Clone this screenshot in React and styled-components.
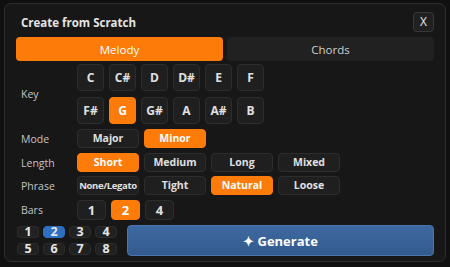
import * as React from "react"
import styled, { createGlobalStyle } from "styled-components"

const GlobalStyle = createGlobalStyle`
  html, body {
    margin: 0;
    padding: 0;
    background: #101010;
  }
  body {
    font-family: "Open Sans", "Noto Sans", sans-serif;
    color: #e2e2e2;
  }
  * {
    box-sizing: border-box;
  }
`

const orange = "#fd7b08"

const Panel = styled.div`
  margin: 3px 4px 0;
  width: 442px;
  height: 259px;
  background: #171717;
  border: 1px solid #2e2e2e;
  border-radius: 7px;
  padding: 8px 11px 0;
  display: flex;
  flex-direction: column;
`

const Header = styled.div`
  display: flex;
  justify-content: space-between;
  align-items: center;
  height: 20px;
  padding-left: 5px;
`

const Title = styled.h1`
  margin: 0;
  font-size: 11.5px;
  font-weight: 700;
  color: #e4e4e4;
`

const CloseButton = styled.button`
  width: 21px;
  height: 20px;
  padding: 0;
  border: 1px solid #383838;
  border-radius: 4px;
  background: #202020;
  color: #e8e8e8;
  font-family: inherit;
  font-size: 12px;
  line-height: 1;
`

const Tabs = styled.div`
  margin-top: 5px;
  display: grid;
  grid-template-columns: 1fr 1fr;
  gap: 4px;
`

const Tab = styled.button`
  height: 24px;
  padding: 0;
  border: none;
  border-radius: 4px;
  background: ${(p) => (p.$active ? orange : "#212121")};
  color: ${(p) => (p.$active ? "#fff" : "#cfcfcf")};
  font-family: inherit;
  font-size: 11.5px;
  font-weight: 500;
`

const Row = styled.div`
  margin-top: ${(p) => p.$mt}px;
  display: grid;
  grid-template-columns: 61px 1fr;
  align-items: center;
`

const Label = styled.span`
  padding-left: 5px;
  font-size: 10.5px;
  color: #c4c4c4;
`

const KeyGrid = styled.div`
  display: grid;
  grid-template-columns: repeat(6, 27px);
  column-gap: 5px;
  row-gap: 6px;
`

const Options = styled.div`
  display: flex;
  gap: 5px;
`

const Choice = styled.button`
  width: ${(p) => p.$w}px;
  height: ${(p) => p.$h}px;
  padding: 0;
  border: 1px solid ${(p) => (p.$active ? orange : "#2d2d2d")};
  border-radius: 4px;
  background: ${(p) => (p.$active ? orange : "#1f1f1f")};
  color: ${(p) => (p.$active ? "#fff" : "#e0e0e0")};
  font-family: inherit;
  font-size: ${(p) => p.$fs || 10.5}px;
  letter-spacing: ${(p) => (p.$tight ? "-0.35px" : "normal")};
  font-weight: 700;
  line-height: 1;
  white-space: nowrap;
`

const Bottom = styled.div`
  margin-top: 5px;
  display: flex;
  align-items: center;
  gap: 10px;
`

const MiniGrid = styled.div`
  margin-left: 1px;
  display: grid;
  grid-template-columns: repeat(4, 22px);
  column-gap: 4px;
  row-gap: 5px;
`

const Mini = styled.button`
  height: 12px;
  padding: 0;
  border: 1px solid ${(p) => (p.$active ? "#2f6fc2" : "#2d2d2d")};
  border-radius: 4px;
  background: ${(p) => (p.$active ? "#2f6fc2" : "#212121")};
  color: #e6e6e6;
  font-family: inherit;
  font-size: 12.5px;
  font-weight: 700;
  line-height: 10px;
`

const Generate = styled.button`
  flex: 1;
  height: 31px;
  padding: 0;
  border: 1px solid #4a76ad;
  border-radius: 4px;
  background: linear-gradient(#3d68a0, #345b8e);
  color: #fff;
  font-family: inherit;
  font-size: 13px;
  font-weight: 700;
`

const keys = ["C", "C#", "D", "D#", "E", "F", "F#", "G", "G#", "A", "A#", "B"]

const OptionRow = ({ label, items, active, w, h, mt, fs }) => (
  <Row $mt={mt}>
    <Label>{label}</Label>
    <Options>
      {items.map((item) => (
        <Choice
          key={item}
          $w={w}
          $h={h}
          $fs={item.length > 8 ? 9.5 : fs}
          $tight={item.length > 8}
          $active={item === active}
        >
          {item}
        </Choice>
      ))}
    </Options>
  </Row>
)

export default function App() {
  return (
    <>
      <GlobalStyle />
      <Panel>
        <Header>
          <Title>Create from Scratch</Title>
          <CloseButton>X</CloseButton>
        </Header>
        <Tabs>
          <Tab $active>Melody</Tab>
          <Tab>Chords</Tab>
        </Tabs>
        <Row $mt={3}>
          <Label>Key</Label>
          <KeyGrid>
            {keys.map((k) => (
              <Choice key={k} $w={27} $h={27} $fs={12} $active={k === "G"}>
                {k}
              </Choice>
            ))}
          </KeyGrid>
        </Row>
        <OptionRow label="Mode" items={["Major", "Minor"]} active="Minor" w={62} h={19} mt={5} />
        <OptionRow
          label="Length"
          items={["Short", "Medium", "Long", "Mixed"]}
          active="Short"
          w={62}
          h={19}
          mt={5}
        />
        <OptionRow
          label="Phrase"
          items={["None/Legato", "Tight", "Natural", "Loose"]}
          active="Natural"
          w={62}
          h={19}
          mt={4}
        />
        <OptionRow label="Bars" items={["1", "2", "4"]} active="2" w={29} h={20} mt={5} fs={13} />
        <Bottom>
          <MiniGrid>
            {[1, 2, 3, 4, 5, 6, 7, 8].map((n) => (
              <Mini key={n} $active={n === 2}>
                {n}
              </Mini>
            ))}
          </MiniGrid>
          <Generate>✦ Generate</Generate>
        </Bottom>
      </Panel>
    </>
  )
}
